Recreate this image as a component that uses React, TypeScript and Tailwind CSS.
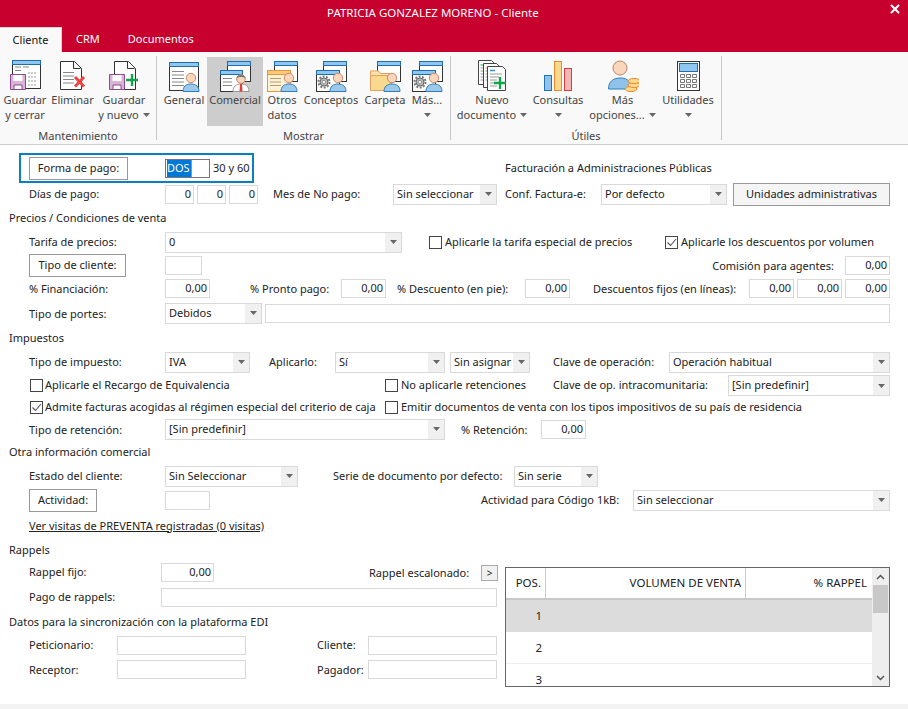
import type { ReactNode } from 'react';
import { X } from 'lucide-react';

const Caret = ({ className = '' }: { className?: string }) => (
  <svg width="7" height="4" viewBox="0 0 7 4" className={className}>
    <path d="M0 0h7L3.5 4z" fill="#666" />
  </svg>
);

const Win = ({ x, y, w, h }: { x: number; y: number; w: number; h: number }) => (
  <g>
    <rect x={x + 0.5} y={y + 0.5} width={w} height={h} fill="#fff" stroke="#333" />
    <rect x={x + 0.5} y={y + 0.5} width={w} height={4} fill="#8fc7ef" stroke="#1f6fb0" />
  </g>
);

const Person = ({ cx = 23, cy = 18 }: { cx?: number; cy?: number }) => (
  <g>
    <path d={`M${cx - 8} ${cy + 13.5}c0-5 3-7.5 8-7.5s8 2.5 8 7.5z`} fill="#9cc8ea" stroke="#2f7fc0" />
    <circle cx={cx} cy={cy} r="4.7" fill="#fad6bc" stroke="#c98b66" />
  </g>
);

const Lines = ({ x, y, w, n = 3 }: { x: number; y: number; w: number; n?: number }) => (
  <g stroke="#888">
    {Array.from({ length: n }).map((_, i) => (
      <path key={i} d={`M${x} ${y + i * 3.5 + 0.5}h${w}`} />
    ))}
  </g>
);

const Floppy = () => (
  <g>
    <path d="M1.5 14.5h15v15h-15z" fill="#d9b4d9" stroke="#8d4a8d" />
    <path d="M4.5 15h9v6h-9z" fill="#fff" />
    <path d="M5 25h8v4.5H5z" fill="#fff" stroke="#8d4a8d" />
  </g>
);

const Gear = ({ cx = 9, cy = 22 }: { cx?: number; cy?: number }) => (
  <g>
    <circle cx={cx} cy={cy} r="5.5" fill="none" stroke="#777" strokeWidth="2" strokeDasharray="2 1.4" />
    <circle cx={cx} cy={cy} r="4" fill="#bbb" stroke="#666" />
    <circle cx={cx} cy={cy} r="1.600" fill="#fff" stroke="#666" strokeWidth="0.6" />
  </g>
);

const Doc = ({ x = 5, w = 22 }: { x?: number; w?: number }) => (
  <path
    d={`M${x + 0.5} 1.5h${w - 7}l7 7v21h-${w}z M${x + w - 7.5} 1.5v7h7`}
    fill="#fff"
    stroke="#333"
  />
);

const Icon = ({ children }: { children: ReactNode }) => (
  <svg width="32" height="32" viewBox="0 0 32 32" className="shrink-0">
    {children}
  </svg>
);

const icons: Record<string, ReactNode> = {
  guardar: (
    <Icon>
      <Win x={3} y={0} w={28} h={28} />
      <path d="M6 7h6M14 7h6M6 10.5h6" stroke="#888" />
      <path d="M19 13h9M19 17h9M19 21h9M19 25h9" stroke="#999" strokeDasharray="2 1" />
      <Floppy />
    </Icon>
  ),
  eliminar: (
    <Icon>
      <Doc x={3} w={21} />
      <Lines x={6} y={12} w={11} n={4} />
      <path d="M18 17l9 9.500M27 17l-9 9.500" stroke="#ee4444" strokeWidth="3" />
    </Icon>
  ),
  nuevo: (
    <Icon>
      <Doc x={6} w={21} />
      <Floppy />
      <path d="M24 14v12M18 20h12" stroke="#15a34a" strokeWidth="2.4" />
    </Icon>
  ),
  general: (
    <Icon>
      <Win x={1} y={2} w={29} h={28} />
      <Lines x={4} y={11} w={12} n={5} />
      <Person cx={23} cy={18} />
    </Icon>
  ),
  comercial: (
    <Icon>
      <Win x={8} y={1} w={23} h={20} />
      <Win x={1} y={10} w={22} h={21} />
      <Lines x={4} y={18} w={9} n={3} />
      <path d="M14 31.5c0-5 3-7.500 8-7.500s8 2.500 8 7.500z" fill="#fff" stroke="#999" />
      <path d="M21 24h2l.5 7.500h-3z" fill="#e23b3b" />
      <circle cx="22" cy="19" r="4.300" fill="#fad6bc" stroke="#c98b66" />
      <path d="M17.500 18c0-4 9-4 9 0-3-1.500-6-1.500-9 0z" fill="#777" />
    </Icon>
  ),
  otros: (
    <Icon>
      <Win x={8} y={1} w={23} h={20} />
      <rect x="1.500" y="10.500" width="23" height="21" fill="#fdf2d6" stroke="#e8963c" />
      <rect x="1.500" y="10.500" width="23" height="4" fill="#f9c97c" stroke="#e8963c" />
      <path d="M4 18.500h11M4 22h11M4 25.500h11" stroke="#b89a6a" />
      <Person />
    </Icon>
  ),
  conceptos: (
    <Icon>
      <Win x={8} y={1} w={23} h={20} />
      <Win x={1} y={10} w={23} h={21} />
      <Gear />
      <Person />
    </Icon>
  ),
  carpeta: (
    <Icon>
      <Win x={8} y={1} w={23} h={20} />
      <path d="M1.500 14.500V11h8l2 2.500h11V30h-21z" fill="#fbe3b0" stroke="#e8a060" />
      <path d="M1.500 15.500h21V30.500h-21z" fill="#f8d98e" stroke="#e8a060" />
      <Person />
    </Icon>
  ),
  documento: (
    <Icon>
      <path d="M2.500 0.500h13l3 3v21h-16z" fill="#fff" stroke="#444" />
      <path d="M4.500 5h3" stroke="#15a34a" />
      <path d="M4.500 8h7M4.500 11h7M4.500 14h7M4.500 17h7M4.500 20h7" stroke="#999" />
      <path d="M7.500 3.500h13l3 3v21h-16z" fill="#fff" stroke="#444" />
      <path d="M9.500 8h3" stroke="#e8963c" />
      <path d="M9.500 11h9M9.500 14h9M9.500 17h9M9.500 20h9" stroke="#999" />
      <path d="M11.500 6.500h15l3 3v21h-18z" fill="#fff" stroke="#444" />
      <path d="M14 10.500h5" stroke="#2f8fd0" strokeWidth="1.500" />
      <path d="M14 14h12M14 17h9M14 20h7M14 23h6M14 26h7" stroke="#999" />
      <path d="M24 17v12M18 23h12" stroke="#15a34a" strokeWidth="2.400" />
    </Icon>
  ),
  consultas: (
    <Icon>
      <rect x="2.500" y="15.500" width="7" height="15" fill="#8fc3ea" stroke="#2273b5" />
      <rect x="12.500" y="1.500" width="7" height="29" fill="#fad98f" stroke="#ee8a2e" />
      <rect x="22.500" y="8.500" width="7" height="22" fill="#f2b8b8" stroke="#e23b3b" />
    </Icon>
  ),
  opciones: (
    <Icon>
      <path d="M1.500 29c0-7 4-11 12-11s10 4 10 11z" fill="#8fc3ea" stroke="#2f7fc0" />
      <circle cx="13" cy="8" r="7" fill="#fad6bc" stroke="#b98565" />
      <ellipse cx="24" cy="29" rx="6" ry="2.600" fill="#fad98f" stroke="#ee8a2e" />
      <ellipse cx="27" cy="25" rx="6" ry="2.600" fill="#fad98f" stroke="#ee8a2e" />
      <ellipse cx="27" cy="21" rx="6" ry="2.600" fill="#fad98f" stroke="#ee8a2e" />
    </Icon>
  ),
  utilidades: (
    <Icon>
      <rect x="5.500" y="1.500" width="22" height="29" fill="#fff" stroke="#333" />
      <rect x="7.500" y="3.500" width="18" height="8" fill="#8fc7ef" stroke="#1f6fb0" />
      <path
        d="M8.500 14.500h4v3h-4zM14.500 14.500h4v3h-4zM20.500 14.500h4v3h-4zM8.500 19.500h4v3h-4zM14.500 19.500h4v3h-4zM20.500 19.500h4v3h-4zM8.500 24.500h4v3h-4zM14.500 24.500h4v3h-4zM20.500 24.500h4v3h-4z"
        fill="#fff"
        stroke="#777"
      />
    </Icon>
  ),
};

function RibbonItem({
  icon,
  one,
  two,
  caret,
  className = '',
}: {
  icon: string;
  one: string;
  two?: string;
  caret?: boolean;
  className?: string;
}) {
  return (
    <div className={`flex h-[69px] flex-col items-center pt-[3px] text-[#444] ${className}`}>
      {icons[icon]}
      <div className="h-[15px] whitespace-nowrap leading-[15px]">{one}</div>
      <div className="flex h-[15px] items-center gap-[4px] whitespace-nowrap leading-[15px]">
        {two}
        {caret && <Caret />}
      </div>
    </div>
  );
}

function RibbonGroup({ label, className, children }: { label: string; className: string; children: ReactNode }) {
  return (
    <div className={`mt-[4px] h-[84px] border-r border-[#c6c6c6] ${className}`}>
      <div className="mt-[1px] flex">{children}</div>
      <div className="mt-[2px] text-center leading-[15px] text-[#444]">{label}</div>
    </div>
  );
}

const Field = ({ value = '', className = '' }: { value?: string; className?: string }) => (
  <div className={`h-[19px] shrink-0 border border-[#d9d9d9] bg-white pl-[3px] pr-[2px] text-right leading-[15px] ${className}`}>
    {value}
  </div>
);

const Select = ({ value = '', className = '' }: { value?: string; className?: string }) => (
  <div className={`flex h-[21px] shrink-0 items-stretch border border-[#d9d9d9] bg-white ${className}`}>
    <div className="min-w-0 flex-1 overflow-hidden whitespace-nowrap pl-[3px] leading-[18px]">{value}</div>
    <div className="flex w-[16px] items-center justify-center bg-[#f0f0f0]">
      <Caret />
    </div>
  </div>
);

const Btn = ({ children, className = '' }: { children: ReactNode; className?: string }) => (
  <div className={`flex h-[23px] shrink-0 items-center justify-center border border-[#999] ${className}`}>{children}</div>
);

const Check = ({ checked = false, className = '' }: { checked?: boolean; className?: string }) => (
  <div className={`flex h-[13px] w-[13px] shrink-0 items-center justify-center border border-[#444] bg-white ${className}`}>
    {checked && (
      <svg width="11" height="11" viewBox="0 0 11 11">
        <path d="M1.500 5.500l3 3 5.500-6.500" fill="none" stroke="#555" strokeWidth="1.100" />
      </svg>
    )}
  </div>
);

const Heading = ({ children, className }: { children: ReactNode; className: string }) => (
  <div className={`flex items-center pl-[9px] ${className}`}>{children}</div>
);

const Row = ({ children, className }: { children: ReactNode; className: string }) => (
  <div className={`flex items-center whitespace-nowrap pl-[29px] ${className}`}>{children}</div>
);

export default function App() {
  return (
    <div className="flex h-[709px] w-[908px] flex-col overflow-hidden bg-white font-['Noto_Sans',sans-serif] text-[11px] text-[#222]">
      {/* Title bar and tabs */}
      <div className="relative h-[52px] shrink-0 bg-[#c8002d] text-white">
        <div className="pl-[327px] pt-[5px] text-[11.5px] leading-[16px]">PATRICIA GONZALEZ MORENO - Cliente</div>
        <X size={14} strokeWidth={3.5} className="absolute right-[6px] top-[2px]" />
        <div className="absolute bottom-0 left-0 flex h-[25px] items-center">
          <div className="flex h-[25px] w-[62px] items-center justify-center border-r border-t border-[#d5d5d5] bg-[#f9f9f9] text-[#111]">Cliente</div>
          <div className="ml-[14px]">CRM</div>
          <div className="ml-[28px]">Documentos</div>
        </div>
      </div>

      {/* Ribbon */}
      <div className="flex h-[93px] shrink-0 border-b border-[#cfcfcf] bg-[#f9f9f9]">
        <RibbonGroup label="Mantenimiento" className="w-[157px]">
          <RibbonItem icon="guardar" one="Guardar" two="y cerrar" className="w-[50px]" />
          <RibbonItem icon="eliminar" one="Eliminar" className="w-[45px]" />
          <RibbonItem icon="nuevo" one="Guardar" two="y nuevo" caret className="w-[58px]" />
        </RibbonGroup>
        <RibbonGroup label="Mostrar" className="w-[294px]">
          <RibbonItem icon="general" one="General" className="ml-[4px] w-[46px]" />
          <RibbonItem icon="comercial" one="Comercial" className="w-[56px] bg-[#cdcdcd]" />
          <RibbonItem icon="otros" one="Otros" two="datos" className="w-[38px]" />
          <RibbonItem icon="conceptos" one="Conceptos" className="w-[60px]" />
          <RibbonItem icon="carpeta" one="Carpeta" className="w-[48px]" />
          <RibbonItem icon="conceptos" one="Más..." caret className="w-[36px]" />
        </RibbonGroup>
        <RibbonGroup label="Útiles" className="w-[271px]">
          <RibbonItem icon="documento" one="Nuevo" two="documento" caret className="w-[82px]" />
          <RibbonItem icon="consultas" one="Consultas" caret className="w-[50px]" />
          <RibbonItem icon="opciones" one="Más" two="opciones..." caret className="ml-[7px] w-[65px]" />
          <RibbonItem icon="utilidades" one="Utilidades" caret className="ml-[5px] w-[56px]" />
        </RibbonGroup>
      </div>

      {/* Form */}
      <div className="flex flex-1 flex-col pt-[8px]">
        <Row className="h-[30px]">
          <div className="-ml-[10px] flex h-[30px] w-[235px] items-center border-2 border-[#0a7fc2] pl-[8px]">
            <Btn className="w-[99px]">Forma de pago:</Btn>
            <div className="ml-[37px] flex h-[19px] w-[45px] border border-[#777] pl-[1px] leading-[15px]">
              <span className="w-[24px] bg-[#0078d7] text-white">DOS</span>
              <span className="w-[1px] bg-[#e8860c]" />
            </div>
            <span className="ml-[3px]">30 y 60</span>
          </div>
          <span className="ml-[251px]">Facturación a Administraciones Públicas</span>
        </Row>
        <Row className="h-[22px]">
          <span className="w-[136px]">Días de pago:</span>
          <Field value="0" className="w-[29px]" />
          <Field value="0" className="ml-[3px] w-[29px]" />
          <Field value="0" className="ml-[3px] w-[29px]" />
          <span className="ml-[15px] w-[120px]">Mes de No pago:</span>
          <Select value="Sin seleccionar" className="w-[104px]" />
          <span className="ml-[8px] w-[96px]">Conf. Factura-e:</span>
          <Select value="Por defecto" className="w-[126px]" />
          <Btn className="ml-[6px] w-[157px] bg-[#f5f5f5]">Unidades administrativas</Btn>
        </Row>

        <Heading className="h-[26px]">Precios / Condiciones de venta</Heading>
        <Row className="h-[22px]">
          <span className="w-[136px]">Tarifa de precios:</span>
          <Select value="0" className="w-[237px]" />
          <Check className="ml-[27px]" />
          <span className="ml-[3px] w-[220px]">Aplicarle la tarifa especial de precios</span>
          <Check checked />
          <span className="ml-[3px]">Aplicarle los descuentos por volumen</span>
        </Row>
        <Row className="h-[24px]">
          <Btn className="w-[97px]">Tipo de cliente:</Btn>
          <Field className="ml-[39px] w-[37px]" />
          <span className="ml-auto mt-[2px]">Comisión para agentes:</span>
          <Field value="0,00" className="ml-[11px] mr-[18px] w-[45px]" />
        </Row>
        <Row className="h-[23px]">
          <span className="mt-[2px] w-[136px]">% Financiación:</span>
          <Field value="0,00" className="w-[45px]" />
          <span className="ml-[40px] mt-[2px] w-[91px]">% Pronto pago:</span>
          <Field value="0,00" className="w-[45px]" />
          <span className="ml-[11px] mt-[2px] w-[128px]">% Descuento (en pie):</span>
          <Field value="0,00" className="w-[45px]" />
          <span className="ml-[23px] mt-[2px] w-[156px]">Descuentos fijos (en líneas):</span>
          <Field value="0,00" className="w-[45px]" />
          <Field value="0,00" className="ml-[3px] w-[45px]" />
          <Field value="0,00" className="ml-[3px] w-[45px]" />
        </Row>
        <Row className="h-[26px]">
          <span className="mt-[2px] w-[136px]">Tipo de portes:</span>
          <Select value="Debidos" className="w-[97px]" />
          <Field className="ml-[3px] w-[625px]" />
        </Row>

        <Heading className="h-[24px]">Impuestos</Heading>
        <Row className="h-[24px]">
          <span className="w-[136px]">Tipo de impuesto:</span>
          <Select value="IVA" className="w-[85px]" />
          <span className="ml-[19px] w-[66px]">Aplicarlo:</span>
          <Select value="Sí" className="w-[110px]" />
          <Select value="Sin asignar" className="ml-[5px] w-[80px]" />
          <span className="ml-[23px] w-[116px]">Clave de operación:</span>
          <Select value="Operación habitual" className="w-[221px]" />
        </Row>
        <Row className="h-[23px]">
          <Check className="ml-[1px]" />
          <span className="ml-[2px] w-[340px]">Aplicarle el Recargo de Equivalencia</span>
          <Check />
          <span className="ml-[3px] w-[152px]">No aplicarle retenciones</span>
          <span className="w-[175px]">Clave de op. intracomunitaria:</span>
          <Select value="[Sin predefinir]" className="w-[162px]" />
        </Row>
        <Row className="h-[20px]">
          <Check checked className="ml-[1px]" />
          <span className="ml-[2px] w-[340px]">Admite facturas acogidas al régimen especial del criterio de caja</span>
          <Check />
          <span className="ml-[3px]">Emitir documentos de venta con los tipos impositivos de su país de residencia</span>
        </Row>
        <Row className="h-[24px]">
          <span className="mt-[2px] w-[136px]">Tipo de retención:</span>
          <Select value="[Sin predefinir]" className="w-[280px]" />
          <span className="ml-[16px] mt-[2px] w-[80px]">% Retención:</span>
          <Field value="0,00" className="w-[45px]" />
        </Row>

        <Heading className="h-[23px]">Otra información comercial</Heading>
        <Row className="h-[24px]">
          <span className="w-[136px]">Estado del cliente:</span>
          <Select value="Sin Seleccionar" className="w-[133px]" />
          <span className="ml-[35px] w-[181px]">Serie de documento por defecto:</span>
          <Select value="Sin serie" className="w-[84px]" />
        </Row>
        <Row className="h-[24px]">
          <Btn className="w-[68px]">Actividad:</Btn>
          <Field className="ml-[68px] w-[45px]" />
          <span className="ml-[271px] w-[152px]">Actividad para Código 1kB:</span>
          <Select value="Sin seleccionar" className="w-[257px]" />
        </Row>
        <Row className="h-[28px]">
          <span className="underline">Ver visitas de PREVENTA registradas (0 visitas)</span>
        </Row>

        <Heading className="h-[20px]">Rappels</Heading>
        <div className="flex">
          <div className="w-[505px] shrink-0">
            <Row className="h-[24px]">
              <span className="w-[132px]">Rappel fijo:</span>
              <Field value="0,00" className="w-[53px]" />
              <span className="ml-[155px] mt-[3px] w-[112px]">Rappel escalonado:</span>
              <div className="mt-[2px] flex h-[16px] w-[17px] items-center justify-center border border-[#aaa] bg-[#f0f0f0] text-[10px]">&gt;</div>
            </Row>
            <Row className="h-[26px]">
              <span className="w-[132px]">Pago de rappels:</span>
              <Field className="w-[336px]" />
            </Row>
            <Heading className="h-[24px]">Datos para la sincronización con la plataforma EDI</Heading>
            <Row className="h-[23px]">
              <span className="w-[88px]">Peticionario:</span>
              <Field className="w-[129px]" />
              <span className="ml-[71px] w-[51px]">Cliente:</span>
              <Field className="w-[129px]" />
            </Row>
            <Row className="h-[24px]">
              <span className="mt-[2px] w-[88px]">Receptor:</span>
              <Field className="w-[129px]" />
              <span className="ml-[71px] mt-[2px] w-[51px]">Pagador:</span>
              <Field className="w-[129px]" />
            </Row>
          </div>

          {/* Rappel grid */}
          <div className="mt-[7px] flex h-[120px] w-[385px] shrink-0 overflow-hidden border border-[#666] text-[11.5px]">
            <div className="w-[366px] shrink-0">
              <div className="flex h-[32px] border-b-2 border-[#c8c8c8]">
                <div className="flex w-[40px] items-center justify-end border-r border-[#c8c8c8] pr-[4px]">POS.</div>
                <div className="flex w-[200px] items-center justify-end border-r border-[#c8c8c8] pr-[4px]">VOLUMEN DE VENTA</div>
                <div className="flex flex-1 items-center justify-end pr-[5px]">% RAPPEL</div>
              </div>
              <div className="flex h-[32px] items-center bg-[#dcdcdc]">
                <span className="w-[40px] pr-[4px] text-right">1</span>
              </div>
              <div className="flex h-[32px] items-center border-b border-[#eeeeee]">
                <span className="w-[40px] pr-[4px] text-right">2</span>
              </div>
              <div className="flex h-[32px] items-center">
                <span className="w-[40px] pr-[4px] text-right">3</span>
              </div>
            </div>
            <div className="flex flex-1 flex-col items-stretch bg-[#eeeeee]">
              <div className="flex h-[17px] items-center justify-center">
                <svg width="9" height="6" viewBox="0 0 9 6">
                  <path d="M1 5l3.500-3.500L8 5" fill="none" stroke="#555" strokeWidth="1.500" />
                </svg>
              </div>
              <div className="mx-[1px] h-[28px] bg-[#c8c8c8]" />
              <div className="mt-auto flex h-[17px] items-center justify-center">
                <svg width="9" height="6" viewBox="0 0 9 6">
                  <path d="M1 1l3.500 3.500L8 1" fill="none" stroke="#555" strokeWidth="1.500" />
                </svg>
              </div>
            </div>
          </div>
        </div>
      </div>
      <div className="h-[5px] shrink-0 bg-[#f3f3f3]" />
    </div>
  );
}
